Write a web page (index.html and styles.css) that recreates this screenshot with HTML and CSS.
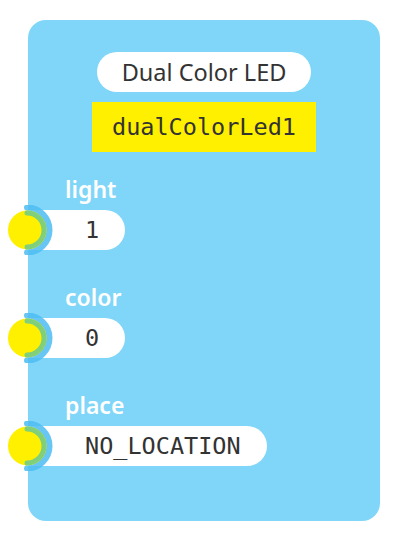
FILE: index.html
```html
<!DOCTYPE html>
<html>
<head>
<meta charset="utf-8">
<link rel="stylesheet" href="styles.css">
</head>
<body>
<div class="block">
  <div class="header">
    <div class="title">Dual Color LED</div>
    <div class="name">dualColorLed1</div>
  </div>
  <div class="fields">
    <div class="field">
      <div class="label">light</div>
      <div class="input">
        <svg class="conn" width="60" height="50" viewBox="0 0 60 50"><circle cx="27.5" cy="25" r="19.5" fill="#fff000"/><path d="M27 2.5 A22.5 22.5 0 0 1 27 47.5" fill="none" stroke="#4cbcf2" stroke-opacity="0.85" stroke-width="6" stroke-linecap="round"/><path d="M27 8 A17 17 0 0 1 27 42" fill="none" stroke="#80cf7a" stroke-width="5" stroke-linecap="round"/></svg>
        <span>1</span>
      </div>
    </div>
    <div class="field">
      <div class="label">color</div>
      <div class="input">
        <svg class="conn" width="60" height="50" viewBox="0 0 60 50"><circle cx="27.5" cy="25" r="19.5" fill="#fff000"/><path d="M27 2.5 A22.5 22.5 0 0 1 27 47.5" fill="none" stroke="#4cbcf2" stroke-opacity="0.85" stroke-width="6" stroke-linecap="round"/><path d="M27 8 A17 17 0 0 1 27 42" fill="none" stroke="#80cf7a" stroke-width="5" stroke-linecap="round"/></svg>
        <span>0</span>
      </div>
    </div>
    <div class="field">
      <div class="label">place</div>
      <div class="input">
        <svg class="conn" width="60" height="50" viewBox="0 0 60 50"><circle cx="27.5" cy="25" r="19.5" fill="#fff000"/><path d="M27 2.5 A22.5 22.5 0 0 1 27 47.5" fill="none" stroke="#4cbcf2" stroke-opacity="0.85" stroke-width="6" stroke-linecap="round"/><path d="M27 8 A17 17 0 0 1 27 42" fill="none" stroke="#80cf7a" stroke-width="5" stroke-linecap="round"/></svg>
        <span>NO_LOCATION</span>
      </div>
    </div>
  </div>
</div>
</body>
</html>
```
FILE: styles.css
```css
html, body {
  margin: 0;
  background: #ffffff;
}
body {
  padding: 20px 0 0 28px;
}
.block {
  width: 352px;
  box-sizing: border-box;
  background: #80d6f8;
  border-radius: 18px;
  padding: 32px 0 55px 0;
}
.header {
  display: flex;
  flex-direction: column;
  align-items: center;
  gap: 10px;
}
.title {
  background: #ffffff;
  border-radius: 20px;
  height: 40px;
  line-height: 40px;
  padding: 0 25px;
  font-family: "Noto Sans", "Open Sans", sans-serif;
  font-size: 23.5px;
  color: #333333;
}
.name {
  background: #fff000;
  height: 50px;
  line-height: 50px;
  padding: 0 20px;
  font-family: "DejaVu Sans Mono", monospace;
  font-size: 23.5px;
  color: #333333;
}
.fields {
  margin-top: 22px;
  display: flex;
  flex-direction: column;
  gap: 32px;
}
.field {
  display: flex;
  flex-direction: column;
  align-items: flex-start;
  gap: 6px;
}
.label {
  padding-left: 37px;
  height: 30px;
  line-height: 30px;
  font-family: "Noto Sans", "Open Sans", sans-serif;
  font-weight: 600;
  font-size: 23px;
  color: #ffffff;
}
.input {
  position: relative;
  background: #ffffff;
  border-radius: 0 20px 20px 0;
  height: 40px;
  line-height: 40px;
  padding: 0 26px 0 57px;
  font-family: "DejaVu Sans Mono", monospace;
  font-size: 23.5px;
  color: #333333;
}
.conn {
  position: absolute;
  left: -28px;
  top: -5px;
}
```
